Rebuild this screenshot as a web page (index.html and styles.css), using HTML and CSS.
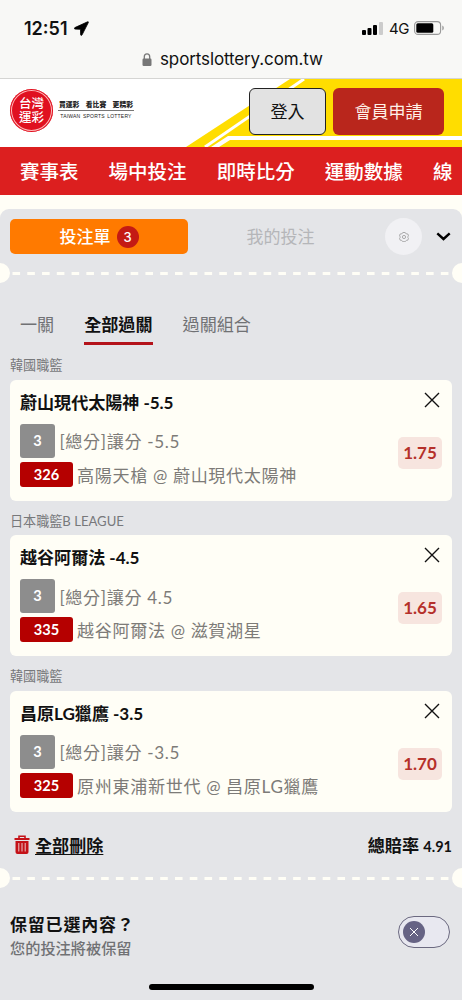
FILE: index.html
```html
<!DOCTYPE html>
<html lang="zh-Hant">
<head>
<meta charset="utf-8">
<meta name="viewport" content="width=device-width, initial-scale=1">
<title>台灣運彩</title>
<link rel="stylesheet" href="styles.css">
</head>
<body>
<div class="browser">
  <div class="status">
    <span class="time">12:51</span>
    <svg class="loc" width="15" height="15" viewBox="0 0 15 15"><path d="M13.6.8.9 6.6c-.9.5-.7 1.5.2 1.5l5.4.2.1 5.3c0 1 1.1 1.1 1.5.2l6.2-12.2c.3-.7-.1-1.1-.7-.8Z" stroke="#000" stroke-width=".8" stroke-linejoin="round"/></svg>
    <svg class="signal" width="21" height="13" viewBox="0 0 21 13"><rect y="8" width="4" height="5" rx="1"/><rect x="5.5" y="6" width="4" height="7" rx="1"/><rect x="11" y="3" width="4" height="10" rx="1"/><rect x="17" width="4" height="13" rx="1" fill="#ccc"/></svg>
    <span class="net">4G</span>
    <svg class="battery" width="31" height="14" viewBox="0 0 31 14"><rect x=".6" y=".6" width="26" height="12.8" rx="3.5" fill="none" stroke="#999" stroke-width="1.1"/><rect x="2.3" y="2.3" width="17" height="9.4" rx="1.5"/><path d="M28.3 4.5c2 .8 2 4.2 0 5Z" fill="#999"/></svg>
  </div>
  <div class="address">
    <svg width="10" height="13" viewBox="0 0 10 13"><path d="M2.3 6V3.7a2.7 2.9 0 0 1 5.4 0V6" fill="none" stroke="#777" stroke-width="1.3"/><rect x=".5" y="5.5" width="9" height="7.5" rx="1.2" fill="#777"/></svg>
    <span>sportslottery.com.tw</span>
  </div>
</div>

<header class="header">
  <svg class="stripes" width="462" height="68" viewBox="0 0 462 68"><path d="M186 68 290 0H462V68Z" fill="#fd0"/><path d="M205 68 304 0" stroke="#fff" stroke-width="3"/><path d="M211 68 228 57H462V61H230L219 68Z" fill="#fff"/></svg>
  <div class="seal">台灣<br>運彩</div>
  <div class="slogan">
    <div class="slogan-zh"><span>買運彩</span><span>看比賽</span><span>更精彩</span></div>
    <div class="slogan-en">TAIWAN SPORTS LOTTERY</div>
  </div>
  <button class="btn login">登入</button>
  <button class="btn join">會員申請</button>
</header>

<nav class="nav"><a>賽事表</a><a>場中投注</a><a>即時比分</a><a>運動數據</a><a>線</a></nav>

<main class="slip">
  <div class="slip-head">
    <div class="slip-tab"><span class="label">投注單</span><span class="count">3</span></div>
    <div class="my-bets">我的投注</div>
    <div class="gear"><svg width="10" height="10" viewBox="0 0 10 10" fill="none" stroke="#999" stroke-width=".8"><path d="M3.8.5h2.4l.5 1 1.2.4 1 .1.6 1.9-.7.9v.6l.7.9-.7 1.9-1.1.1-1 .6-.5.8H3.8l-.5-.8-1-.6-1.1-.1-.7-1.9.7-.9v-.6l-.7-.9L1.1 2l1-.1 1.2-.4Z"/><circle cx="5" cy="5" r="1.6"/></svg></div>
    <svg class="chevron" width="15" height="9" viewBox="0 0 15 9"><path d="m1.3 1.3 6.2 5.7 6.2-5.7" fill="none" stroke="#000" stroke-width="2.4"/></svg>
  </div>

  <div class="tear"><svg width="462" height="20"><circle cy="10" r="10" fill="#fffef6"/><circle cx="462" cy="10" r="10" fill="#fffef6"/><path d="M12.5 10.5H450" stroke="#fffef6" stroke-width="3" stroke-dasharray="7.6 7.17"/></svg></div>

  <div class="modes"><span>一關</span><span class="active">全部過關</span><span>過關組合</span></div>

  <section class="pick">
    <div class="league">韓國職籃</div>
    <div class="card">
      <div class="info">
        <div class="title">蔚山現代太陽神 -5.5</div>
        <div class="line market"><span class="tag grey">3</span><span>[總分]讓分 -5.5</span></div>
        <div class="line match"><span class="tag red">326</span><span>高陽天槍 @ 蔚山現代太陽神</span></div>
      </div>
      <div class="side">
        <svg class="close" width="16" height="16" viewBox="0 0 16 16"><path d="m1 1 14 14M15 1 1 15"/></svg>
        <span class="odds">1.75</span>
      </div>
    </div>
  </section>

  <section class="pick">
    <div class="league">日本職籃B LEAGUE</div>
    <div class="card">
      <div class="info">
        <div class="title">越谷阿爾法 -4.5</div>
        <div class="line market"><span class="tag grey">3</span><span>[總分]讓分 4.5</span></div>
        <div class="line match"><span class="tag red">335</span><span>越谷阿爾法 @ 滋賀湖星</span></div>
      </div>
      <div class="side">
        <svg class="close" width="16" height="16" viewBox="0 0 16 16"><path d="m1 1 14 14M15 1 1 15"/></svg>
        <span class="odds">1.65</span>
      </div>
    </div>
  </section>

  <section class="pick">
    <div class="league">韓國職籃</div>
    <div class="card">
      <div class="info">
        <div class="title">昌原LG獵鷹 -3.5</div>
        <div class="line market"><span class="tag grey">3</span><span>[總分]讓分 -3.5</span></div>
        <div class="line match"><span class="tag red">325</span><span>原州東浦新世代 @ 昌原LG獵鷹</span></div>
      </div>
      <div class="side">
        <svg class="close" width="16" height="16" viewBox="0 0 16 16"><path d="m1 1 14 14M15 1 1 15"/></svg>
        <span class="odds">1.70</span>
      </div>
    </div>
  </section>

  <div class="summary">
    <svg width="16" height="19" viewBox="0 0 16 19"><path d="M5 3V1.2h6V3" fill="none" stroke="#c41218" stroke-width="1.6"/><path d="M.5 3h15v2H.5Z" fill="#c41218"/><path d="M1.5 6h13v11a2 2 0 0 1-2 2h-9a2 2 0 0 1-2-2Z" fill="#c41218"/><path d="M4.8 8v8.5M8 8v8.5M11.2 8v8.5" stroke="#ecdcdd" stroke-width=".9"/></svg>
    <a class="clear">全部刪除</a>
    <span class="total">總賠率 <span class="sum">4.91</span></span>
  </div>

  <div class="tear"><svg width="462" height="20"><circle cy="10" r="10" fill="#fffef6"/><circle cx="462" cy="10" r="10" fill="#fffef6"/><path d="M12.5 10.5H450" stroke="#fffef6" stroke-width="3" stroke-dasharray="7.6 7.17"/></svg></div>

  <div class="keep">
    <div>
      <div class="keep-title">保留已選內容？</div>
      <div class="keep-sub">您的投注將被保留</div>
    </div>
    <div class="toggle"><div class="knob"><svg width="10" height="10" viewBox="0 0 10 10"><path d="m1 1 8 8M9 1 1 9" stroke="#fff" stroke-width="1"/></svg></div></div>
  </div>
  <div class="home"></div>
</main>
</body>
</html>
```
FILE: styles.css
```css
* { box-sizing: border-box; }
body {
  margin: 0;
  width: 462px;
  height: 1000px;
  overflow: hidden;
  background: #fffef6;
  color: #111;
  font-family: Lato, "Noto Sans CJK TC", sans-serif;
}
svg { display: block; flex: none; }
span, a { white-space: nowrap; }

.browser { height: 79px; padding-top: 16px; background: #f8f8f6; border-bottom: 1px solid #d5d5d3; font-family: Inter, sans-serif; }
.status { display: flex; align-items: center; height: 24px; padding: 0 17px 0 24px; }
.time { font-size: 18px; font-weight: 600; }
.loc { margin-left: 6px; }
.signal { margin-left: auto; margin-right: 6px; }
.net { font-size: 15px; font-weight: 400; margin-right: 5px; letter-spacing: -0.4px; }
.address { display: flex; align-items: center; gap: 8px; height: 22px; margin-top: 8px; padding: 0 0 0 142px; font-size: 17px; letter-spacing: -0.12px; }

.header { position: relative; display: flex; align-items: flex-start; height: 68px; padding: 9px 0 0 10px; background: #fff; }
.stripes { position: absolute; left: 0; top: 0; }
.seal {
  position: relative;
  width: 43px;
  height: 43px;
  margin-top: 1px;
  padding-top: 7px;
  border-radius: 50%;
  background: #e01020;
  box-shadow: inset 0 0 0 1px #e01020, inset 0 0 0 2px #fbb;
  color: #fff;
  text-align: center;
  font-family: "Noto Sans CJK TC", sans-serif;
  font-size: 12.5px;
  line-height: 14px;
  font-weight: 500;
}
.slogan { position: relative; width: 76px; margin: 10px 0 0 5px; color: #222; }
.slogan-zh { display: flex; justify-content: space-between; padding: 0 1px 2px; height: 13px; border-bottom: 1px solid #777; font-size: 6.8px; line-height: 12px; font-weight: 900; }
.slogan-en { padding-top: 2px; text-align: center; font: 400 5px/6px "Liberation Sans", sans-serif; white-space: nowrap; word-spacing: 1px; letter-spacing: 0.2px; }
.btn { position: relative; height: 47px; padding: 0; border-radius: 6px; font: 17px/24px Lato, "Noto Sans CJK TC", sans-serif; }
.login { width: 77px; margin-left: 115px; border: 1px solid #222; background: #e2e2e2; color: #111; }
.join { width: 111px; margin-left: 7px; border: 0; background: #b9261c; color: #fff0e8; }

.nav { display: flex; gap: 30.1px; height: 48px; padding-left: 20px; overflow: hidden; background: #dc1f1f; color: #fff; font-size: 19.5px; line-height: 49px; font-weight: 500; }

.slip { height: 791px; margin-top: 14px; padding-top: 10px; border-radius: 9px 9px 0 0; background: #e4e5e8; }
.slip-head { display: flex; align-items: center; height: 35px; padding: 0 11px 0 10px; }
.slip-tab { display: flex; align-items: center; justify-content: center; gap: 6px; width: 178px; height: 35px; border-radius: 5px; background: #ff7a00; color: #fff; font-size: 17px; font-weight: 500; }
.label, .my-bets { padding-bottom: 2px; }
.count { width: 22px; height: 22px; border-radius: 50%; background: #c41a14; text-align: center; font: 500 13px/22px Inter, sans-serif; }
.my-bets { width: 185px; text-align: center; font-size: 17px; color: #b5b6b9; }
.gear { display: flex; align-items: center; justify-content: center; width: 37px; height: 37px; margin-left: 12px; border-radius: 50%; background: #f1f1f4; }
.chevron { margin-left: 14px; }
.tear { height: 20px; margin-top: 9px; }

.modes { display: flex; gap: 30px; height: 43px; margin-top: 19px; padding-left: 20px; font-size: 17.1px; line-height: 46px; color: #707174; }
.modes .active { height: 43px; border-bottom: 3px solid #b4131b; color: #111; font-weight: 700; }

.pick { height: 155.6px; padding: 8px 10px 0; }
.league { height: 26.5px; font-size: 13.1px; line-height: 24px; color: #77787b; }
.card { display: flex; justify-content: space-between; height: 121px; padding: 10px; border-radius: 6px; background: #fffef6; }
.title { height: 25px; font-size: 17.1px; line-height: 25px; font-weight: 700; letter-spacing: -0.05px; }
.line { display: flex; align-items: center; color: #7d7b78; font-size: 17.1px; letter-spacing: 0.64px; }
.market { height: 34px; margin-top: 9px; gap: 4.5px; }
.match { height: 25px; margin-top: 4px; gap: 4px; }
.tag { border-radius: 3px; color: #fff; text-align: center; font-size: 14.6px; font-weight: 700; letter-spacing: 0; }
.grey { width: 35px; height: 34px; line-height: 34px; background: #8d8d8d; }
.red { width: 53px; height: 25px; line-height: 25px; background: #b50000; }
.side { display: flex; flex-direction: column; align-items: flex-end; padding-top: 2px; }
.close { margin-right: 2px; fill: none; stroke: #111; stroke-width: 1.4; }
.odds { width: 44px; height: 32px; margin-top: 29px; border-radius: 5px; background: #f7e5df; color: #b5302a; font-size: 17px; line-height: 32px; font-weight: 700; text-align: center; }

.summary { display: flex; align-items: center; height: 36px; margin-top: 15px; padding: 0 10px 0 14px; font-size: 17.1px; font-weight: 600; }
.clear { margin-left: 5px; text-decoration: underline; text-decoration-thickness: 1px; text-underline-offset: 2px; }
.total { margin-left: auto; }
.sum { font-size: 14.5px; font-weight: 700; }
.summary + .tear { margin-top: 5px; }

.keep { display: flex; justify-content: space-between; height: 54px; margin-top: 23px; padding: 0 12px 0 10px; }
.keep-title { height: 27px; font-size: 17px; line-height: 27px; font-weight: 600; letter-spacing: 0.8px; }
.keep-sub { font-size: 15.2px; line-height: 20px; color: #707174; font-weight: 500; }
.toggle { width: 52px; height: 32px; margin-top: 5px; padding: 4px; border: 1px solid #6b6980; border-radius: 16px; background: #e8e8f0; }
.knob { display: flex; align-items: center; justify-content: center; width: 22px; height: 22px; border-radius: 50%; background: #666384; }
.home { width: 165px; height: 6px; margin: 19px auto 0; border-radius: 3px; background: #000; }
```
